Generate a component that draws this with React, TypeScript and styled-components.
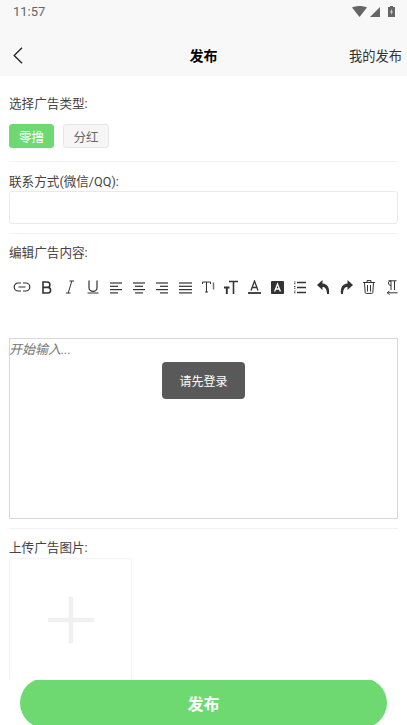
import { ReactNode } from 'react'
import styled, { createGlobalStyle } from 'styled-components'

const GlobalStyle = createGlobalStyle`
  html, body {
    margin: 0;
    padding: 0;
    background: #fff;
  }
  * {
    box-sizing: border-box;
  }
`

const Page = styled.div`
  position: relative;
  display: flex;
  flex-direction: column;
  width: 407px;
  height: 725px;
  overflow: hidden;
  background: #fff;
  color: #444;
  font-family: Roboto, 'Noto Sans CJK SC', sans-serif;
  font-size: 13px;
`

const StatusBar = styled.div`
  display: flex;
  flex: none;
  align-items: center;
  justify-content: space-between;
  height: 38px;
  padding: 0 12px 15px 13px;
  background: #f8f8f8;
  color: #666;
  font-size: 13px;
`

const StatusIcons = styled.div`
  display: flex;
  align-items: center;
  gap: 3px;
`

const BatteryIcon = styled.svg`
  margin-left: 5px;
`

const NavBar = styled.div`
  display: grid;
  flex: none;
  grid-template-columns: 1fr auto 1fr;
  align-items: center;
  height: 38px;
  padding: 0 5px 4px;
  background: #f8f8f8;
`

const BackIcon = styled.svg`
  margin-left: 8px;
`

const NavTitle = styled.div`
  color: #000;
  font-size: 14px;
  font-weight: 700;
`

const NavLink = styled.div`
  justify-self: end;
  color: #333;
  font-size: 13.25px;
`

const Content = styled.div`
  flex: 1;
  min-height: 0;
  overflow: hidden;
  padding: 0 9px;
`

const Section = styled.section<{ $pad: string }>`
  padding: ${({ $pad }) => $pad};
  border-bottom: 1px solid #f2f2f2;
`

const LastSection = styled.section`
  padding-top: 9px;
`

const Label = styled.div`
  height: 19px;
  color: #444;
  font-size: 12.6px;
  line-height: 19px;
`

const Chips = styled.div`
  display: flex;
  gap: 9px;
  margin-top: 11px;
`

const Chip = styled.div<{ $active?: boolean }>`
  display: flex;
  align-items: center;
  justify-content: center;
  width: ${({ $active }) => ($active ? '45px' : '46px')};
  height: 24px;
  border: 1px solid ${({ $active }) => ($active ? '#6fd971' : '#e6e6e6')};
  border-radius: 3px;
  background: ${({ $active }) => ($active ? '#6fd971' : '#f6f6f6')};
  color: ${({ $active }) => ($active ? '#fff' : '#666')};
  font-size: 12.5px;
`

const TextBox = styled.div`
  height: 33px;
  border: 1px solid #e9e9e9;
  border-radius: 3px;
`

const Toolbar = styled.div`
  display: flex;
  align-items: center;
  height: 24px;
  margin-top: 13px;
`

const Tool = styled.div<{ $wide?: boolean }>`
  display: flex;
  flex: none;
  align-items: center;
  justify-content: center;
  width: ${({ $wide }) => ($wide ? '26.5px' : '23px')};
  height: 24px;
  color: #333;
`

const Editor = styled.div`
  height: 181px;
  margin-top: 39px;
  padding: 2px 0 0;
  border: 1px solid #d8d8d8;
  color: #777;
  font-size: 13px;
  font-style: italic;
  line-height: 17px;
  text-indent: -1px;
`

const UploadBox = styled.div`
  display: flex;
  align-items: center;
  justify-content: center;
  width: 123px;
  height: 123px;
  margin-top: 1px;
  border: 1px solid #f3f3f3;
  border-radius: 3px;
`

const Footer = styled.div`
  flex: none;
  height: 45px;
  overflow: hidden;
  padding: 0 20px;
  background: #fff;
`

const PublishButton = styled.div`
  display: flex;
  align-items: center;
  justify-content: center;
  height: 50px;
  margin-top: -2px;
  border-radius: 25px;
  background: #6fd971;
  color: #fff;
  font-size: 16px;
  font-weight: 700;
`

const Toast = styled.div`
  position: absolute;
  top: 362px;
  left: 162px;
  display: flex;
  align-items: center;
  justify-content: center;
  width: 83px;
  height: 37px;
  border-radius: 4px;
  background: #595959;
  color: #fff;
  font-size: 12px;
`

const Icon = ({ w = 16, h = 16, children }: { w?: number; h?: number; children: ReactNode }) => (
  <svg width={w} height={h} viewBox={`0 0 ${w} ${h}`} fill="none" stroke="currentColor" strokeWidth="1.2">
    {children}
  </svg>
)

const lines = (rows: [number, number][]) =>
  rows.map(([a, b], i) => <path key={i} d={`M${a} ${2 + i * 3.3}H${b}`} />)

const tools: { wide?: boolean; icon: ReactNode }[] = [
  {
    wide: true,
    icon: (
      <Icon w={18} h={10}>
        <path d="M8 1H5.200a4 4 0 0 0 0 8H8M10 1h2.800a4 4 0 0 1 0 8H10M5.500 5h7" />
      </Icon>
    ),
  },
  {
    icon: (
      <Icon w={10} h={13}>
        <path d="M1 1h4.200a2.700 2.700 0 0 1 0 5.400H1h4.800a2.800 2.800 0 0 1 0 5.600H1z" strokeWidth="1.600" />
      </Icon>
    ),
  },
  {
    icon: (
      <Icon w={8} h={14}>
        <path d="M3.500 1H8M0 13h4.500M5.800 1 2.200 13" strokeWidth="1" />
      </Icon>
    ),
  },
  {
    icon: (
      <Icon w={12} h={14}>
        <path d="M2 .5v7.300a4 3.600 0 0 0 8 0V.5M0.500 13h11" strokeWidth="1.200" />
      </Icon>
    ),
  },
  { icon: <Icon w={12} h={13}>{lines([[0, 12], [0, 8], [0, 12], [0, 8]])}</Icon> },
  { icon: <Icon w={12} h={13}>{lines([[0, 12], [2, 10], [0, 12], [2, 10]])}</Icon> },
  { icon: <Icon w={12} h={13}>{lines([[0, 12], [4, 12], [0, 12], [4, 12]])}</Icon> },
  { icon: <Icon w={13} h={13}>{lines([[0, 13], [0, 13], [0, 13], [0, 13]])}</Icon> },
  {
    icon: (
      <Icon w={13} h={12}>
        <path d="M.5 3V1h8v2M4.500 1v10M3 11h3" strokeWidth="1" />
        <path d="M11.500 1.500v7" strokeWidth="1.500" stroke="#777" />
      </Icon>
    ),
  },
  {
    icon: (
      <Icon w={14} h={14}>
        <path d="M5 1.500h9M9.500 1.500V14" strokeWidth="1.600" />
        <path d="M0 7.500h5.500M2.800 7.500V14" strokeWidth="1.900" />
      </Icon>
    ),
  },
  {
    icon: (
      <Icon w={13} h={14}>
        <path d="M3 10.500 6.500 1l3.500 9.500M4.200 7.500h4.600" strokeWidth="1.300" />
        <path d="M0 13h13" strokeWidth="1.800" />
      </Icon>
    ),
  },
  {
    icon: (
      <Icon w={13} h={13}>
        <rect width="13" height="13" rx="1" fill="currentColor" stroke="none" />
        <path d="M3.600 10.500 6.500 3l2.900 7.500M4.600 8h3.800" stroke="#fff" strokeWidth="1.300" />
      </Icon>
    ),
  },
  {
    icon: (
      <Icon w={12} h={13}>
        <path d="M3 1.500H12M3 6.500H12M3 11.500H12" strokeWidth="1.300" />
        <path d="M.8 .5v3M.8 5v3M.8 9.500v3" strokeWidth="1.300" strokeDasharray="1 .7" />
      </Icon>
    ),
  },
  {
    icon: (
      <svg width="13" height="14" viewBox="0 0 13 14" fill="currentColor">
        <path d="M5.500 0 0 5l5.500 5V7c2.600 0 4 1.500 4.600 7h1.900c.8-6.500-1.500-10-6.500-10.500z" />
      </svg>
    ),
  },
  {
    icon: (
      <svg width="13" height="14" viewBox="0 0 13 14" fill="currentColor">
        <path d="M7.500 0 13 5l-5.500 5V7C4.900 7 3.500 8.500 2.900 14H1C.2 7.500 2.500 4 7.500 3.500z" />
      </svg>
    ),
  },
  {
    icon: (
      <Icon w={12} h={14}>
        <path d="M0 2.500h12M4 2.300V.6h4v1.700M1.500 3l.7 9.600c0 .5.400.8 1 .8h5.600c.6 0 1-.3 1-.8L10.500 3M4.500 5v6.500M7.500 5v6.500" strokeWidth="1" />
      </Icon>
    ),
  },
  {
    icon: (
      <Icon w={11} h={15}>
        <path d="M1.500 .8h8M4 1v9M7.500 1v9M4 5.500C2.500 5.500 1.500 4.500 1.500 3S2.500 .8 4 .8M0 12.800h10.500M2.500 10.800l-2 2 2 2" strokeWidth="1" />
      </Icon>
    ),
  },
]

export default function App() {
  return (
    <Page>
      <GlobalStyle />
      <StatusBar>
        <span>11:57</span>
        <StatusIcons>
          <svg width="15" height="11" viewBox="0 0 15 11" fill="#666">
            <path d="M0 1.500C4.500-.5 10.500-.5 15 1.500L7.500 11z" />
          </svg>
          <svg width="10" height="10" viewBox="0 0 10 10" fill="#666">
            <path d="M10 0V10H0z" />
          </svg>
          <BatteryIcon width="7" height="11" viewBox="0 0 7 11">
            <path d="M2 0h3v1h2v10H0V1h2z" fill="#666" />
            <path d="M4.200 2.500 2 6.500h1.300L2.800 9 5 5.500H3.700z" fill="#ddd" />
          </BatteryIcon>
        </StatusIcons>
      </StatusBar>
      <NavBar>
        <BackIcon width="10" height="17" viewBox="0 0 10 17" fill="none" stroke="#222" strokeWidth="1.3">
          <path d="M9 .8 1.200 8.500 9 16.200" />
        </BackIcon>
        <NavTitle>发布</NavTitle>
        <NavLink>我的发布</NavLink>
      </NavBar>
      <Content>
        <Section $pad="18px 0 13px">
          <Label>选择广告类型:</Label>
          <Chips>
            <Chip $active>零撸</Chip>
            <Chip>分红</Chip>
          </Chips>
        </Section>
        <Section $pad="10px 0 9px">
          <Label>联系方式(微信/QQ):</Label>
          <TextBox />
        </Section>
        <Section $pad="9px 0 9px">
          <Label>编辑广告内容:</Label>
          <Toolbar>
            {tools.map((tool, i) => (
              <Tool key={i} $wide={tool.wide}>
                {tool.icon}
              </Tool>
            ))}
          </Toolbar>
          <Editor>开始输入...</Editor>
        </Section>
        <LastSection>
          <Label>上传广告图片:</Label>
          <UploadBox>
            <svg width="46" height="46" viewBox="0 0 46 46" stroke="#f0f0f0" strokeWidth="4.5">
              <path d="M0 23H46M23 0V46" />
            </svg>
          </UploadBox>
        </LastSection>
      </Content>
      <Footer>
        <PublishButton>发布</PublishButton>
      </Footer>
      <Toast>请先登录</Toast>
    </Page>
  )
}
